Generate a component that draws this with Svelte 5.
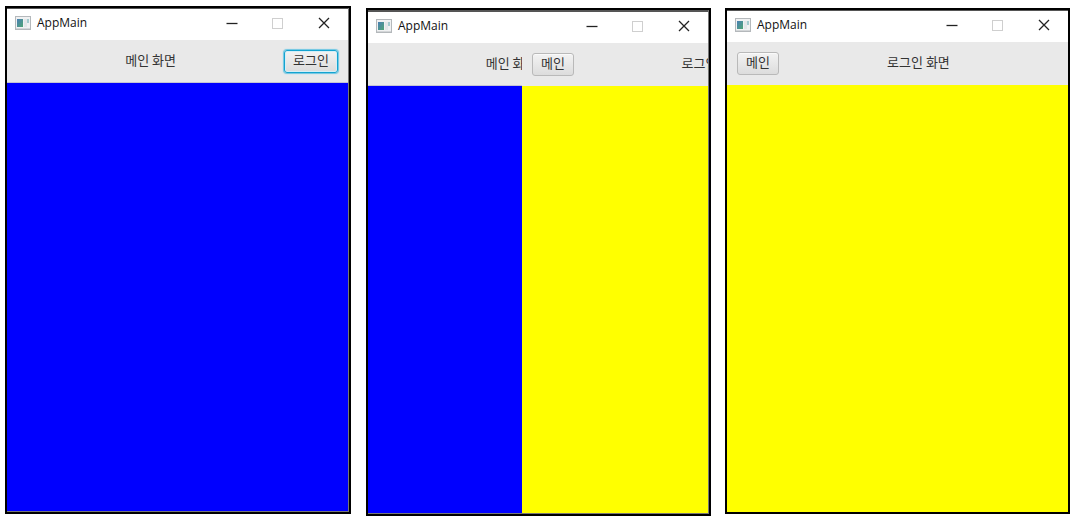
<script>
  const frames = [
    { id: 'main', main: true, login: false },
    { id: 'slide', main: true, login: true },
    { id: 'login', main: false, login: true }
  ];
</script>

{#snippet mainPane(covered)}
  <div class="pane">
    <header class="bar lined">
      <span class="label">메인 화면</span>
      <button class="btn" class:focused={!covered} class:covered>로그인</button>
    </header>
    <div class="body blue"></div>
  </div>
{/snippet}

{#snippet loginPane()}
  <div class="pane">
    <header class="bar">
      <button class="btn">메인</button>
      <span class="label">로그인 화면</span>
    </header>
    <div class="body yellow"></div>
  </div>
{/snippet}

<main class="page">
  {#each frames as frame (frame.id)}
    <section class="window {frame.id}">
      <div class="title">
        <svg class="app" width="16" height="14" viewBox="0 0 16 14" aria-hidden="true">
          <defs>
            <linearGradient id="g-{frame.id}" x1="0" y1="0" x2="1" y2="1">
              <stop offset="0" stop-color="#4a7fb5" />
              <stop offset="1" stop-color="#4fa575" />
            </linearGradient>
          </defs>
          <rect x="0.5" y="0.5" width="15" height="13" fill="#f0f1f2" stroke="#b4b8bb" />
          <rect x="1" y="12" width="14" height="1" fill="#d3d6d8" />
          <rect x="2" y="3" width="6" height="8" fill="url(#g-{frame.id})" />
          <rect x="9" y="3" width="3" height="8" fill="#e2e6e8" />
          <rect x="12" y="3" width="2" height="4" fill="#a5cbcf" />
        </svg>
        <span class="name">AppMain</span>
        <button class="ctl" aria-label="Minimize">
          <svg width="12" height="12" viewBox="0 0 12 12"><path d="M0.5 6.5H11.5" stroke="#222" stroke-width="1.3" /></svg>
        </button>
        <button class="ctl" aria-label="Maximize" disabled>
          <svg width="12" height="12" viewBox="0 0 12 12"><rect x="0.5" y="1.5" width="10" height="10" fill="none" stroke="#cfcfcf" /></svg>
        </button>
        <button class="ctl" aria-label="Close">
          <svg width="12" height="12" viewBox="0 0 12 12"><path d="M1 1L11 11M11 1L1 11" stroke="#222" stroke-width="1.3" /></svg>
        </button>
      </div>
      <div class="stage">
        {#if frame.main}{@render mainPane(frame.login)}{/if}
        {#if frame.main && frame.login}
          <div class="sliding">{@render loginPane()}</div>
        {:else if frame.login}
          {@render loginPane()}
        {/if}
      </div>
    </section>
  {/each}
</main>

<style>
  :global(body) {
    margin: 0;
    background: #fff;
  }
  .page {
    box-sizing: border-box;
    min-height: 100vh;
    display: grid;
    grid-template-columns: 346fr 346fr 345fr;
    gap: 14px;
    padding: 6px 5px 2px;
    font-family: "Noto Sans CJK KR", sans-serif;
    font-size: 13px;
    color: #333;
  }
  .window {
    display: flex;
    flex-direction: column;
    min-width: 0;
    box-sizing: border-box;
    border: 2px solid #000;
    overflow: hidden;
  }
  .main {
    margin-bottom: 2px;
  }
  .slide {
    margin: 2px 0 0 1px;
  }
  .login {
    margin: 2px 0;
  }
  .main,
  .slide {
    box-shadow: inset -1px -1px #777;
  }
  .title {
    display: flex;
    align-items: center;
    height: 28px;
    padding: 0 1px 3px 8px;
    border-top: 1px solid #555;
    background: #fff;
  }
  .slide .title {
    border-top-width: 2px;
  }
  .main .title,
  .slide .title,
  .main .stage,
  .slide .stage {
    margin-right: 1px;
  }
  .main .stage,
  .slide .stage {
    margin-bottom: 1px;
  }
  .app {
    flex: none;
  }
  .name {
    flex: 1;
    margin-left: 6px;
    font-family: "Open Sans", "Noto Sans", sans-serif;
    font-size: 12px;
    line-height: 16px;
    color: #111;
  }
  .ctl {
    display: grid;
    place-items: center;
    width: 46px;
    height: 28px;
    padding: 0;
    border: 0;
    background: none;
  }
  .stage {
    position: relative;
    display: flex;
    flex: 1;
    overflow: hidden;
  }
  .pane {
    display: flex;
    flex: 1;
    flex-direction: column;
    min-width: 0;
  }
  .sliding {
    position: absolute;
    top: 0;
    left: 45%;
    display: flex;
    box-sizing: border-box;
    width: 100%;
    height: 100%;
    margin-left: 1px;
  }
  .bar {
    display: flex;
    align-items: center;
    padding: 10px;
    background: #e9e9e9;
  }
  .lined {
    box-shadow: inset 0 -1px #c4c4d4;
  }
  .label {
    flex: 1;
    padding-bottom: 4px;
    text-align: center;
    line-height: 16px;
    white-space: nowrap;
  }
  .btn {
    flex: none;
    box-sizing: border-box;
    height: 23px;
    padding: 0 8px 4px;
    border: 1px solid #b9b9b9;
    border-radius: 3px;
    background: linear-gradient(#f3f3f3, #dcdcdc);
    box-shadow: inset 0 1px #fafafa;
    font: inherit;
    line-height: 16px;
    color: #333;
  }
  .focused {
    border-color: #14a3d0;
    box-shadow: 0 0 1px 1px #6cc6e3, inset 0 0 0 1px #d5eef6;
  }
  .covered {
    visibility: hidden;
  }
  .body {
    flex: 1;
  }
  .blue {
    background: #00f;
  }
  .yellow {
    background: #ff0;
  }
</style>
